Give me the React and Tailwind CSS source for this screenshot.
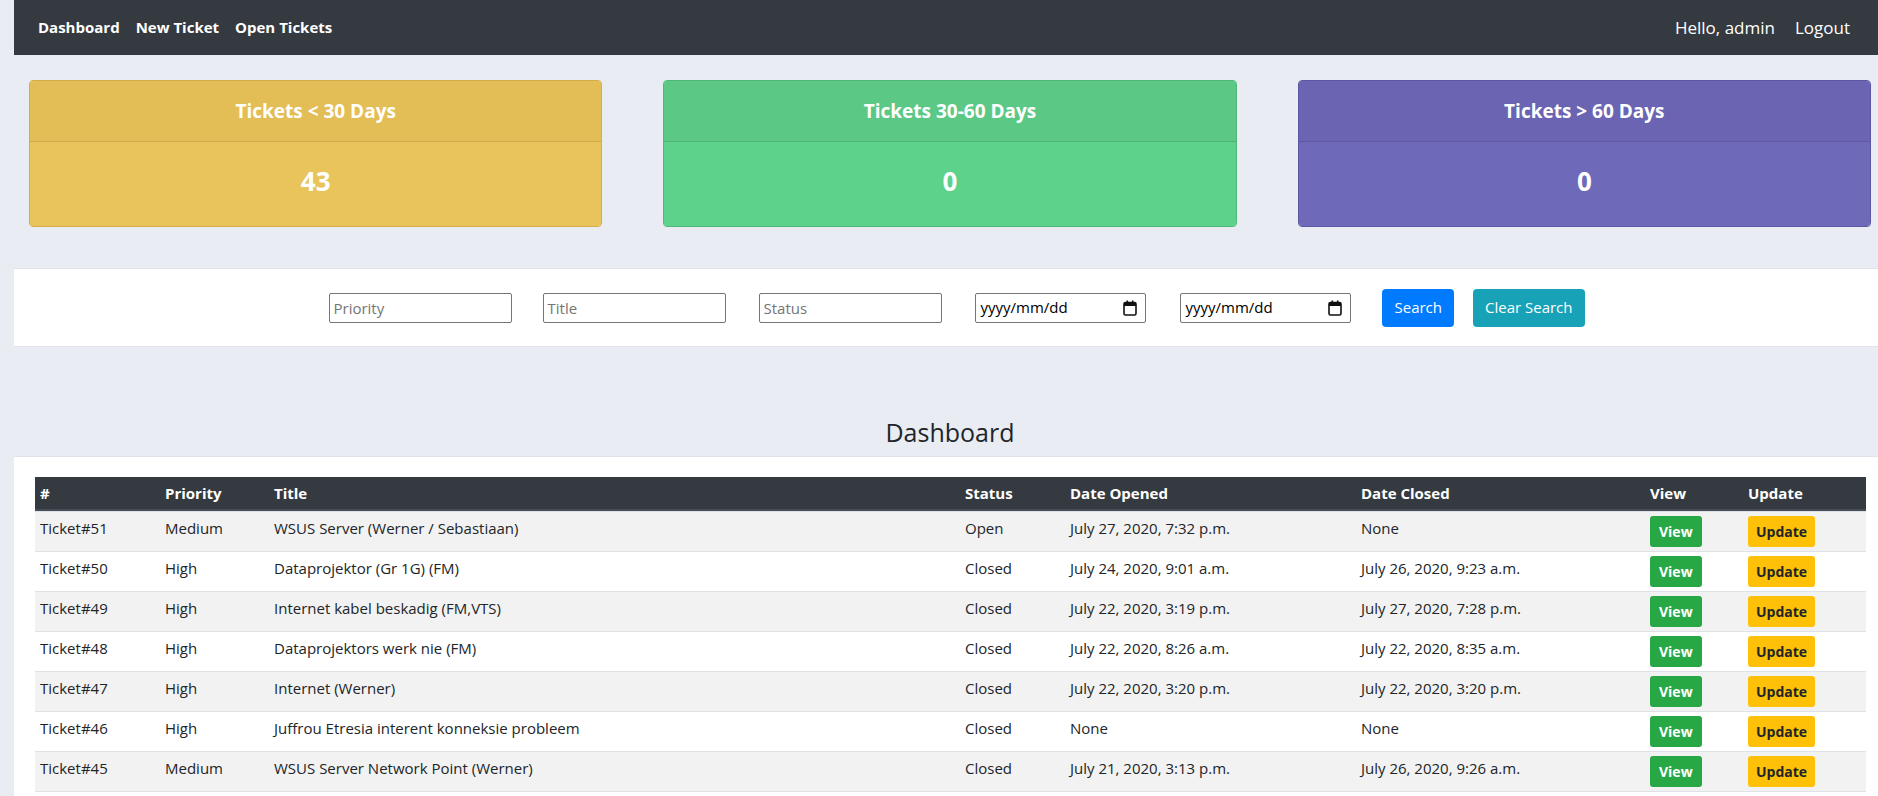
import React from "react";

// Summary cards across the top
const cards = [
  {
    title: "Tickets < 30 Days",
    count: 43,
    head: "bg-[#e3bd55]",
    body: "bg-[#e9c45b]",
    border: "border-[#d5ad48]",
    line: "border-[#d1ab4a]",
  },
  {
    title: "Tickets 30-60 Days",
    count: 0,
    head: "bg-[#5bc985]",
    body: "bg-[#5dd28a]",
    border: "border-[#4fb877]",
    line: "border-[#4fb577]",
  },
  {
    title: "Tickets > 60 Days",
    count: 0,
    head: "bg-[#6a64b2]",
    body: "bg-[#6e69b8]",
    border: "border-[#5c57a3]",
    line: "border-[#5d58a6]",
  },
];

const tickets = [
  ["Ticket#51", "Medium", "WSUS Server (Werner / Sebastiaan)", "Open", "July 27, 2020, 7:32 p.m.", "None"],
  ["Ticket#50", "High", "Dataprojektor (Gr 1G) (FM)", "Closed", "July 24, 2020, 9:01 a.m.", "July 26, 2020, 9:23 a.m."],
  ["Ticket#49", "High", "Internet kabel beskadig (FM,VTS)", "Closed", "July 22, 2020, 3:19 p.m.", "July 27, 2020, 7:28 p.m."],
  ["Ticket#48", "High", "Dataprojektors werk nie (FM)", "Closed", "July 22, 2020, 8:26 a.m.", "July 22, 2020, 8:35 a.m."],
  ["Ticket#47", "High", "Internet (Werner)", "Closed", "July 22, 2020, 3:20 p.m.", "July 22, 2020, 3:20 p.m."],
  ["Ticket#46", "High", "Juffrou Etresia interent konneksie probleem", "Closed", "None", "None"],
  ["Ticket#45", "Medium", "WSUS Server Network Point (Werner)", "Closed", "July 21, 2020, 3:13 p.m.", "July 26, 2020, 9:26 a.m."],
];

const CalendarIcon = () => (
  <svg width="14" height="16" viewBox="0 0 14 16" className="shrink-0">
    <rect x="1" y="2.5" width="12" height="12.5" rx="1.5" fill="none" stroke="#111" strokeWidth="1.6" />
    <rect x="1" y="2.5" width="12" height="3.5" fill="#111" />
    <rect x="3.5" y="0.5" width="1.6" height="3" fill="#111" />
    <rect x="8.9" y="0.5" width="1.6" height="3" fill="#111" />
  </svg>
);

const DateField = () => (
  <div className="w-[171px] h-[30px] border border-[#767676] rounded-[2px] bg-white flex items-center justify-between pl-[4px] pr-[8px] text-[15px] text-black">
    <span>yyyy/mm/dd</span>
    <CalendarIcon />
  </div>
);

export default function App() {
  return (
    <div className="h-screen bg-[#e9ecf3] pl-[14px] overflow-hidden font-['Open_Sans','Noto_Sans',sans-serif] text-[#212529]">
      {/* Navbar */}
      <nav className="h-[55px] bg-[#343a40] flex items-center justify-between pl-[24px] pr-[28px]">
        <div className="flex items-center gap-[16px] text-white font-bold text-[15px]">
          <a>Dashboard</a>
          <a>New Ticket</a>
          <a>Open Tickets</a>
        </div>
        <div className="flex items-center gap-[20px] text-white text-[17px]">
          <span>Hello, admin</span>
          <a>Logout</a>
        </div>
      </nav>

      {/* Summary cards */}
      <div className="grid grid-cols-3 gap-[61px] pl-[15px] pr-[7px] mt-[25px]">
        {cards.map((c) => (
          <div key={c.title} className={`rounded-[4px] border ${c.border} overflow-hidden text-white`}>
            <div className={`${c.head} h-[61px] flex items-center justify-center border-b ${c.line} font-bold text-[19px]`}>
              {c.title}
            </div>
            <div className={`${c.body} h-[84px] flex items-center justify-center pb-[6px] font-bold text-[26px]`}>
              {c.count}
            </div>
          </div>
        ))}
      </div>

      {/* Search filters */}
      <div className="mt-[41px] bg-white border-y border-[#dfe2e8] h-[79px] flex items-center justify-center pl-[22px]">
        <div className="flex items-center">
          <input
            className="w-[183px] h-[30px] border border-[#767676] rounded-[2px] px-[3px] text-[15px] placeholder:text-[#757575] outline-none"
            placeholder="Priority"
          />
          <input
            className="ml-[31px] w-[183px] h-[30px] border border-[#767676] rounded-[2px] px-[3px] text-[15px] placeholder:text-[#757575] outline-none"
            placeholder="Title"
          />
          <input
            className="ml-[33px] w-[183px] h-[30px] border border-[#767676] rounded-[2px] px-[3px] text-[15px] placeholder:text-[#757575] outline-none"
            placeholder="Status"
          />
          <div className="ml-[33px]">
            <DateField />
          </div>
          <div className="ml-[34px]">
            <DateField />
          </div>
          <button className="ml-[31px] h-[38px] px-[12px] rounded-[4px] bg-[#007bff] text-white text-[15px]">
            Search
          </button>
          <button className="ml-[19px] h-[38px] px-[12px] rounded-[4px] bg-[#17a2b8] text-white text-[15px]">
            Clear Search
          </button>
        </div>
      </div>

      {/* Heading */}
      <div className="h-[109px] flex items-end justify-center pb-[8px] pl-[8px]">
        <h3 className="text-[25px] leading-[31px] font-medium text-[#212529]">Dashboard</h3>
      </div>

      {/* Tickets table */}
      <div className="bg-white border-t border-[#dfe2e8] pt-[20px] pl-[21px] pr-[12px] h-full">
        <table className="w-[1831px] table-fixed border-separate border-spacing-0 text-[15px]">
          <thead>
            <tr className="bg-[#343a40] text-white text-left">
              <th className="w-[125px] px-[5px] py-[4px] leading-6 font-bold border-b-2 border-[#454d55]">#</th>
              <th className="w-[109px] px-[5px] py-[4px] leading-6 font-bold border-b-2 border-[#454d55]">Priority</th>
              <th className="w-[691px] px-[5px] py-[4px] leading-6 font-bold border-b-2 border-[#454d55]">Title</th>
              <th className="w-[105px] px-[5px] py-[4px] leading-6 font-bold border-b-2 border-[#454d55]">Status</th>
              <th className="w-[291px] px-[5px] py-[4px] leading-6 font-bold border-b-2 border-[#454d55]">Date Opened</th>
              <th className="w-[289px] px-[5px] py-[4px] leading-6 font-bold border-b-2 border-[#454d55]">Date Closed</th>
              <th className="w-[98px] px-[5px] py-[4px] leading-6 font-bold border-b-2 border-[#454d55]">View</th>
              <th className="w-[123px] px-[5px] py-[4px] leading-6 font-bold border-b-2 border-[#454d55]">Update</th>
            </tr>
          </thead>
          <tbody>
            {tickets.map((t, i) => (
              <tr key={t[0]} className={i % 2 === 0 ? "bg-[#f2f2f2]" : "bg-white"}>
                {t.map((cell, j) => (
                  <td
                    key={j}
                    className={`px-[5px] py-[4px] leading-6 align-top border-t border-[#dee2e6] whitespace-nowrap ${
                      i === tickets.length - 1 ? "border-b" : ""
                    }`}
                  >
                    {cell}
                  </td>
                ))}
                <td className={`px-[5px] py-[4px] align-top border-t border-[#dee2e6] ${i === tickets.length - 1 ? "border-b" : ""}`}>
                  <button className="h-[31px] px-[9px] rounded-[3px] bg-[#28a745] text-white font-bold text-[14px]">
                    View
                  </button>
                </td>
                <td className={`px-[5px] py-[4px] align-top border-t border-[#dee2e6] ${i === tickets.length - 1 ? "border-b" : ""}`}>
                  <button className="h-[31px] px-[8px] rounded-[3px] bg-[#ffc107] text-[#212529] font-bold text-[14px]">
                    Update
                  </button>
                </td>
              </tr>
            ))}
          </tbody>
        </table>
      </div>
    </div>
  );
}
